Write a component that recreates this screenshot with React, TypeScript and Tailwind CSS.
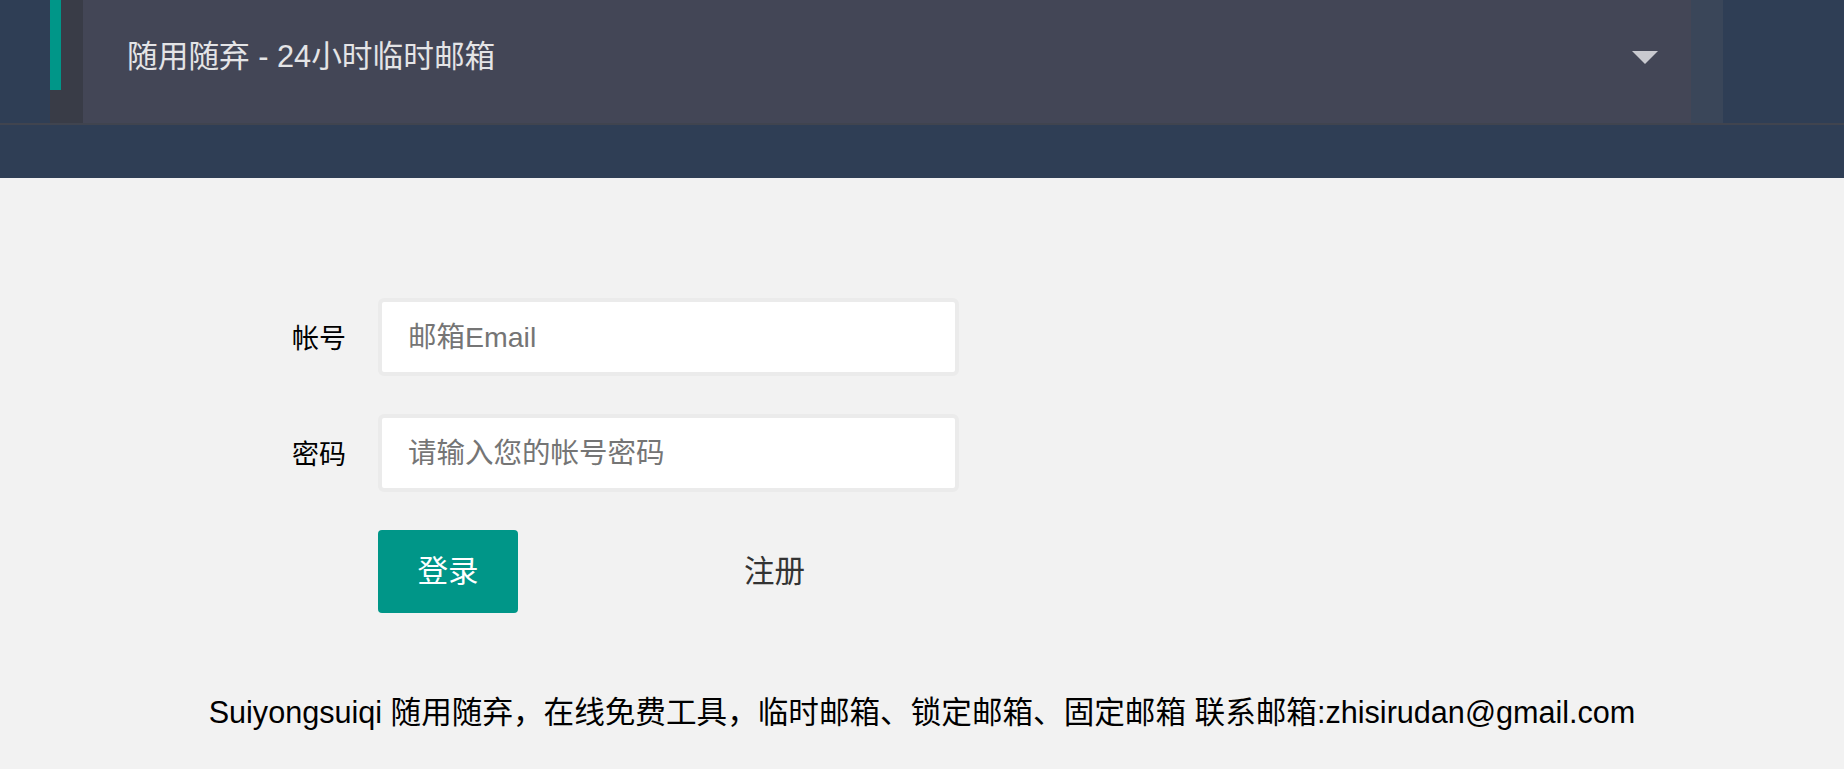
import React from 'react';

const font = { fontFamily: '"Liberation Sans", "Noto Sans CJK SC", sans-serif' };

function Header() {
  return (
    <div className="bg-[#2f3e55] h-[178px]">
      <div className="flex h-[123px]">
        <div className="w-[50px]" />
        {/* side strip with accent */}
        <div className="w-[33px] bg-[#393c47]">
          <div className="w-[11px] h-[90px] bg-[#009688]" />
        </div>
        <div className="w-[1608px] bg-[#434656] flex items-center justify-between pl-[44px] pr-[33px] pb-[8px]">
          <span className="text-[30.7px] text-[#e4e4e6] leading-none">随用随弃 - 24小时临时邮箱</span>
          <span className="w-0 h-0 border-l-[13px] border-r-[13px] border-t-[13px] border-l-transparent border-r-transparent border-t-[#c9c9cf]" />
        </div>
        <div className="w-[32px] bg-[#3a4659]" />
      </div>
      <div className="h-[2px] bg-[#40444f]" />
    </div>
  );
}

function Field({ label, placeholder, type, className }: { label: string; placeholder: string; type: string; className?: string }) {
  return (
    <div className={`flex items-center ml-[190px] ${className ?? ''}`}>
      <label className="w-[156px] text-right text-[27px] text-black pt-[4px]">{label}</label>
      <input
        type={type}
        placeholder={placeholder}
        className="ml-[32px] w-[581px] h-[78px] bg-white border-[4px] border-[#ebebeb] rounded-[6px] pl-[26px] text-[28.5px] text-[#333] placeholder:text-[#757575] outline-none"
      />
    </div>
  );
}

export default function App() {
  return (
    <div className="min-h-[769px] bg-[#f2f2f2]" style={font}>
      <Header />
      <Field label="帐号" placeholder="邮箱Email" type="text" className="mt-[120px]" />
      <Field label="密码" placeholder="请输入您的帐号密码" type="password" className="mt-[38px]" />
      <div className="flex items-center ml-[378px] mt-[38px]">
        <button className="w-[140px] h-[83px] bg-[#009688] text-white text-[30.5px] rounded-[4px]">登录</button>
        <a className="ml-[226px] text-[30.5px] text-[#333] cursor-pointer">注册</a>
      </div>
      <div className="mt-[77px] text-center text-[30.6px] leading-[44px] text-black">
        Suiyongsuiqi 随用随弃，在线免费工具，临时邮箱、锁定邮箱、固定邮箱 联系邮箱:zhisirudan@gmail.com
      </div>
    </div>
  );
}
